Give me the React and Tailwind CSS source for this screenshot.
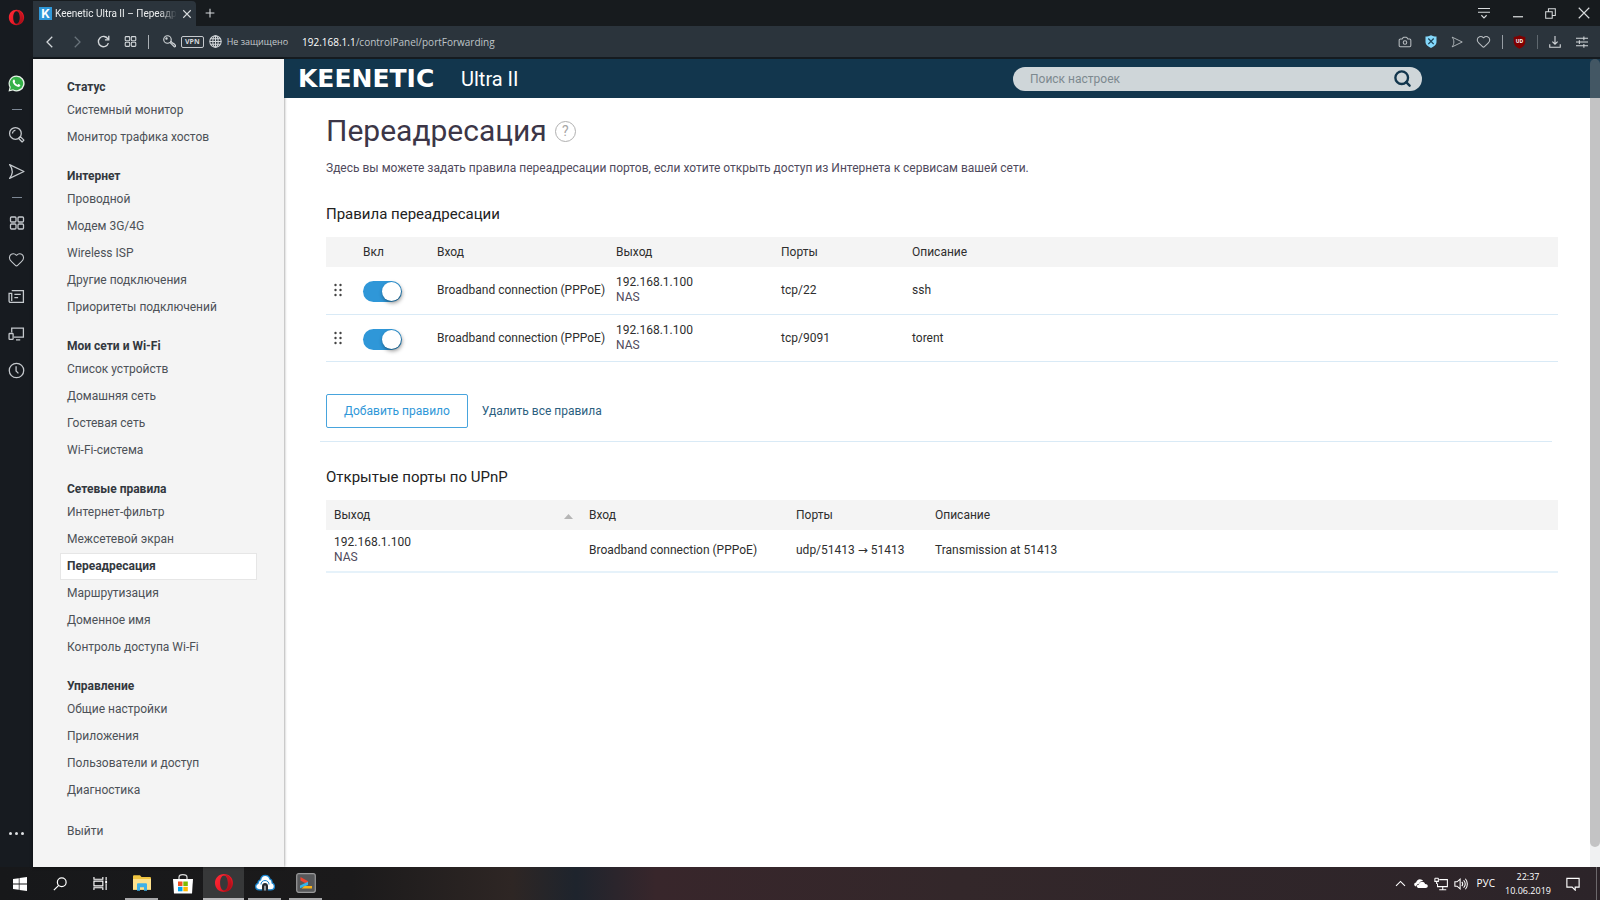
import React, { useState } from 'react';
import { Camera, Heart, Search } from 'lucide-react';

const menu = [
  { title: 'Статус', items: ['Системный монитор', 'Монитор трафика хостов'] },
  {
    title: 'Интернет',
    items: ['Проводной', 'Модем 3G/4G', 'Wireless ISP', 'Другие подключения', 'Приоритеты подключений'],
  },
  { title: 'Мои сети и Wi-Fi', items: ['Список устройств', 'Домашняя сеть', 'Гостевая сеть', 'Wi-Fi-система'] },
  {
    title: 'Сетевые правила',
    items: ['Интернет-фильтр', 'Межсетевой экран', 'Переадресация', 'Маршрутизация', 'Доменное имя', 'Контроль доступа Wi-Fi'],
  },
  { title: 'Управление', items: ['Общие настройки', 'Приложения', 'Пользователи и доступ', 'Диагностика'] },
];

const initialRules = [
  { id: 1, enabled: true, input: 'Broadband connection (PPPoE)', ip: '192.168.1.100', host: 'NAS', ports: 'tcp/22', note: 'ssh' },
  { id: 2, enabled: true, input: 'Broadband connection (PPPoE)', ip: '192.168.1.100', host: 'NAS', ports: 'tcp/9091', note: 'torent' },
];

const upnpRules = [
  { id: 1, ip: '192.168.1.100', host: 'NAS', input: 'Broadband connection (PPPoE)', ports: 'udp/51413 → 51413', note: 'Transmission at 51413' },
];

/* ---------- icons ---------- */

const Icon = ({ size = 16, sw = 1.2, children }) => (
  <svg width={size} height={size} viewBox="0 0 16 16" fill="none" stroke="currentColor" strokeWidth={sw} aria-hidden="true">
    {children}
  </svg>
);

const OperaLogo = ({ size }) => (
  <svg width={size} height={size} viewBox="0 0 20 20" aria-hidden="true">
    <defs>
      <linearGradient id="operaRing" x1="0" x2="1" y1="0" y2="1">
        <stop offset="0" stopColor="#ff2a36" />
        <stop offset="0.55" stopColor="#ee1a28" />
        <stop offset="1" stopColor="#a00d16" />
      </linearGradient>
    </defs>
    <path
      fillRule="evenodd"
      fill="url(#operaRing)"
      d="M10 1C4.8 1 1 5 1 10s3.800 9 9 9 9-4 9-9-3.800-9-9-9Zm0 1.600c2.300 0 3.900 3.200 3.900 7.400s-1.600 7.400-3.900 7.400S6.100 14.200 6.100 10 7.700 2.600 10 2.600Z"
    />
    <path fill="#8f0c15" d="M10 1.800c3.800-1.200 7.600 3.200 7.600 8.200s-3.800 9.400-7.600 8.200c2.600-.6 3.900-3.900 3.900-8.200S12.600 2.400 10 1.800Z" opacity=".4" />
  </svg>
);

const GridIcon = ({ size }) => (
  <Icon size={size} sw={1.3}>
    <rect x="1.500" y="2" width="5.500" height="5" rx="1" />
    <rect x="9" y="2" width="5.500" height="5" rx="1" />
    <rect x="1.500" y="9" width="5.500" height="5" rx="1" />
    <rect x="9" y="9" width="5.500" height="5" rx="1" />
  </Icon>
);

const FlowIcon = ({ size }) => (
  <Icon size={size}>
    <path d="M1.500 1.500 15 8 1.500 14.500C4.600 10.500 4.600 5.500 1.500 1.500Z" strokeLinejoin="round" />
  </Icon>
);

const sideIcons = [
  {
    label: 'Поиск',
    icon: (
      <Icon size={17}>
        <circle cx="7" cy="7" r="5.500" />
        <path d="M7 4.200A2.800 2.800 0 0 0 4.200 7" />
        <path d="m10.800 11 .9-.9 3.300 3.200-1.700 1.700-3.200-3.300Z" strokeLinejoin="round" />
      </Icon>
    ),
  },
  { label: 'My Flow', icon: <FlowIcon size={17} /> },
  { divider: true },
  { label: 'Экспресс-панель', icon: <GridIcon size={16} /> },
  { label: 'Закладки', icon: <Heart size={17} strokeWidth={1.5} /> },
  {
    label: 'Новости',
    icon: (
      <Icon size={17}>
        <path d="M3.500 2.500h11v11H2.300a1.300 1.300 0 0 1-1.300-1.300V5h2.500v7.200" />
        <path d="M6 6h6M6 9h3.500" />
      </Icon>
    ),
  },
  {
    label: 'Вкладки',
    icon: (
      <Icon size={17}>
        <path d="M3.500 7V3h11v8.500H5.500" />
        <rect x="1" y="8" width="3.800" height="5.500" rx=".6" />
        <path d="M7.500 14h4" />
      </Icon>
    ),
  },
  {
    label: 'История',
    icon: (
      <Icon size={17}>
        <circle cx="8" cy="8" r="6.800" />
        <path d="M7.600 4v4.500l2.200 2.200" />
      </Icon>
    ),
  },
];

/* ---------- browser ---------- */

const BrowserSidebar = () => (
  <aside className="w-[33px] shrink-0 bg-[#171b20] flex flex-col items-center text-[#c5c9cd]">
    <button className="h-[34px] w-full flex items-center justify-center" aria-label="Меню Opera">
      <OperaLogo size={17} />
    </button>
    <div className="mt-[31px] w-full flex flex-col items-center">
      <button className="h-[37px] w-full flex items-center justify-center" aria-label="WhatsApp">
        <svg width="17" height="17" viewBox="0 0 17 17" aria-hidden="true">
          <path d="M8.500.5a8 8 0 1 1-3.600 15.100L.5 16.500l1-4.200A8 8 0 0 1 8.500.5Z" fill="#e9f3ea" />
          <path d="M8.600 1.700a6.700 6.700 0 1 1-3.500 12.500l-3.100.8.800-3A6.700 6.700 0 0 1 8.600 1.700Z" fill="#35b148" />
          <path
            d="M5.400 4.700c.4-.4.900-.3 1.100.1l.6 1.300c.1.300 0 .6-.5 1.100.6 1.200 1.600 2.100 2.900 2.700.5-.6.800-.9 1.100-.8l1.400.7c.4.200.4.500.2 1-.4.9-1.500 1.300-2.500 1C7.200 11 5.300 9.100 4.700 6.900c-.2-.8.100-1.600.7-2.200Z"
            fill="#fff"
          />
        </svg>
      </button>
      <div className="h-[14px] flex items-center">
        <span className="w-[10px] h-px bg-[#7c8794]"></span>
      </div>
      {sideIcons.map((item, i) =>
        item.divider ? (
          <div key={i} className="h-[14px] flex items-center">
            <span className="w-[10px] h-px bg-[#7c8794]"></span>
          </div>
        ) : (
          <button key={i} className="h-[37px] w-full flex items-center justify-center" aria-label={item.label}>
            {item.icon}
          </button>
        )
      )}
    </div>
    <button className="mt-auto mb-4 h-9 w-full flex items-center justify-center gap-[3px]" aria-label="Настройка боковой панели">
      <span className="w-[3px] h-[3px] rounded-full bg-[#dfe2e4]"></span>
      <span className="w-[3px] h-[3px] rounded-full bg-[#dfe2e4]"></span>
      <span className="w-[3px] h-[3px] rounded-full bg-[#dfe2e4]"></span>
    </button>
  </aside>
);

const TabBar = () => (
  <div className="h-[26px] bg-[#171b1e] flex items-stretch text-[#d8dbdd]">
    <div className="w-[163px] bg-[#2b343c] rounded-tr flex items-center pl-1.5 pr-px mt-px">
      <span className="w-[13px] h-[13px] shrink-0 bg-[#2f97d8] text-white flex items-center justify-center text-[12px] leading-none font-['Inter',sans-serif] font-bold">
        K
      </span>
      <span className="ml-[3px] flex-1 whitespace-nowrap text-[10px] font-['Roboto',sans-serif] text-[#eceeef] [mask-image:linear-gradient(to_right,black_85%,transparent)]">
        Keenetic Ultra II – Переадр
      </span>
      <button className="w-5 shrink-0 flex items-center justify-center" aria-label="Закрыть вкладку">
        <Icon size={10}>
          <path d="m2 2 12 12M14 2 2 14" strokeWidth="1.700" />
        </Icon>
      </button>
    </div>
    <button className="w-7 flex items-center justify-center" aria-label="Новая вкладка">
      <Icon size={10}>
        <path d="M8 1v14M1 8h14" strokeWidth="1.700" />
      </Icon>
    </button>
    <div className="ml-auto flex">
      <button className="w-[34px] flex items-center justify-center" aria-label="Меню вкладок">
        <Icon size={12}>
          <path d="M0 2h16M0 7h16M4.500 11 8 14.500 11.500 11" strokeWidth="1.500" />
        </Icon>
      </button>
      <button className="w-[33px] flex items-center justify-center" aria-label="Свернуть">
        <Icon size={10}>
          <path d="M0 14h16" strokeWidth="2" />
        </Icon>
      </button>
      <button className="w-[33px] flex items-center justify-center" aria-label="Восстановить">
        <Icon size={11}>
          <path d="M1 5.500h9.500V15H1ZM5 5.500V1h10v10h-4.500" strokeWidth="1.500" />
        </Icon>
      </button>
      <button className="w-[33px] flex items-center justify-center" aria-label="Закрыть">
        <Icon size={12}>
          <path d="m1 1 14 14M15 1 1 15" strokeWidth="1.500" />
        </Icon>
      </button>
    </div>
  </div>
);

const AddressBar = () => (
  <div className="h-[33px] bg-[#2b343c] border-b-2 border-[#151b20] flex items-center text-[#d3d7da]">
    <button className="ml-[3px] w-[27px] flex justify-center" aria-label="Назад">
      <Icon size={12} sw={1.7}>
        <path d="M11 1 4 8l7 7" />
      </Icon>
    </button>
    <button className="w-[27px] flex justify-center text-[#68727a]" aria-label="Вперёд">
      <Icon size={12} sw={1.7}>
        <path d="m5 1 7 7-7 7" />
      </Icon>
    </button>
    <button className="w-[27px] flex justify-center" aria-label="Обновить">
      <Icon size={13} sw={1.7}>
        <path d="M14 10a6.300 6.300 0 1 1-.6-5.200M14.500 1v5H9.800" />
      </Icon>
    </button>
    <button className="w-[27px] flex justify-center" aria-label="Экспресс-панель">
      <GridIcon size={13} />
    </button>
    <span className="w-px h-[14px] ml-1 bg-[#aab0b5]"></span>
    <span className="ml-[14px]">
      <Icon size={13} sw={1.4}>
        <circle cx="5.500" cy="5.500" r="4.600" />
        <circle cx="4.300" cy="4.300" r=".8" />
        <path d="m8.500 9 5.500 5.500 1.200-.3.200-1.800-1.500-.4-.4-1.600-1.600-.4L9.600 7.500" />
      </Icon>
    </span>
    <span className="ml-[5px] h-3 px-[3px] border border-[#c5c9cd] rounded-[2px] text-[7px] leading-[10px] font-bold">VPN</span>
    <span className="ml-[5px]">
      <Icon size={13} sw={1.3}>
        <circle cx="8" cy="8" r="7" />
        <ellipse cx="8" cy="8" rx="3.300" ry="7" />
        <path d="M8 1v14M1 8h14M2 4.500h12M2 11.500h12" />
      </Icon>
    </span>
    <span className="ml-[5px] text-[9px] leading-4 whitespace-nowrap text-[#c5cacd]">Не защищено</span>
    <a href="#address" className="ml-[14px] text-[10px] leading-4 whitespace-nowrap text-[#bfc4c8]">
      <span className="text-white">192.168.1.1</span>/controlPanel/portForwarding
    </a>

    <div className="ml-auto flex items-center pr-[5px] text-[#b9bec2]">
      <button className="w-[26px] flex justify-center" aria-label="Снимок">
        <Camera size={14} strokeWidth={1.8} />
      </button>
      <button className="w-[26px] flex justify-center" aria-label="Блокировка рекламы">
        <svg width="12" height="13" viewBox="0 0 12 13" aria-hidden="true">
          <path d="M.5 1.500C2.500 1.500 4.500 1 6 .2c1.500.8 3.500 1.300 5.500 1.300v5.800c0 2.500-2.500 4.500-5.500 5.600C3 11.800.5 9.800.5 7.300Z" fill="#84d8fb" />
          <path d="m3.300 3.500 5.400 5.600m0-5.600L3.300 9.100" stroke="#1d4459" strokeWidth="1.300" />
        </svg>
      </button>
      <button className="w-[26px] flex justify-center" aria-label="Отправить в My Flow">
        <FlowIcon size={12} />
      </button>
      <button className="w-[26px] flex justify-center" aria-label="Добавить в закладки">
        <Heart size={15} strokeWidth={1.7} />
      </button>
      <span className="w-px h-[14px] mx-[6px] bg-[#969da3]"></span>
      <button className="w-[21px] flex justify-center" aria-label="uBlock Origin">
        <span className="relative flex">
          <svg width="13" height="14" viewBox="0 0 13 14" aria-hidden="true">
            <path d="M6.500.3C8.500 1.600 10.500 1.900 12.300 2v5c0 3-2.500 5.200-5.800 6.700C3.200 12.200.7 10 .7 7V2C2.500 1.900 4.500 1.600 6.500.3Z" fill="#800000" />
          </svg>
          <span className="absolute inset-x-0 top-[3px] text-center text-[5px] leading-[6px] font-bold text-white">UD</span>
        </span>
      </button>
      <span className="w-px h-[14px] ml-[7px] mr-[3px] bg-[#5f686f]"></span>
      <button className="w-[27px] flex justify-center text-[#d3d7da]" aria-label="Загрузки">
        <Icon size={12} sw={1.5}>
          <path d="M8 0v11M4.500 7.500 8 11l3.500-3.500M1 11v4h14v-4" />
        </Icon>
      </button>
      <button className="w-[27px] flex justify-center text-[#d3d7da]" aria-label="Простые настройки">
        <Icon size={12} sw={1.4}>
          <path d="M0 3h16M0 8h16M0 13h16M10.500.5v5M4.500 5.500v5M10.500 10.500v5" />
        </Icon>
      </button>
    </div>
  </div>
);

/* ---------- router page ---------- */

const SideMenu = ({ active, onSelect }) => (
  <nav className="w-[251px] shrink-0 bg-[#f4f4f4] px-[27px] pt-[19px] pb-4 text-[12px] text-[#4c5157] shadow-[0_0_3px_rgba(0,0,0,0.55)] z-10">
    {menu.map((group) => (
      <section key={group.title} className="mb-4 last-of-type:mb-[14px]">
        <h3 className="h-[19px] leading-[19px] pl-[7px] font-bold text-[#33383e]">{group.title}</h3>
        <ul>
          {group.items.map((item) => (
            <li key={item}>
              <a
                href="#menu"
                onClick={() => onSelect(item)}
                className={`block h-[27px] leading-[25px] border px-1.5 ${
                  item === active ? 'bg-white border-[#e6e6e6] font-bold text-[#33383e]' : 'border-transparent'
                }`}
              >
                {item}
              </a>
            </li>
          ))}
        </ul>
      </section>
    ))}
    <a href="#logout" className="block h-[27px] leading-[25px] border border-transparent px-1.5">
      Выйти
    </a>
  </nav>
);

const PageHeader = () => (
  <header className="h-[39px] bg-[#12364d] flex items-center justify-between text-white pl-[14px] pr-[178px]">
    <div className="flex items-center gap-[14px] whitespace-nowrap">
      <span className="min-w-[149px] text-[25px] leading-8 font-bold font-['DejaVu_Sans',sans-serif]">KEENETIC</span>
      <span className="text-[20px] leading-8">Ultra II</span>
    </div>
    <form className="w-[409px] h-6 rounded-full bg-[#cfd6d9] flex items-center pl-[17px] pr-[10px]">
      <input
        type="text"
        aria-label="Поиск настроек"
        placeholder="Поиск настроек"
        className="flex-1 bg-transparent outline-none text-[12px] text-[#12364d] placeholder:text-[#7d898f]"
      />
      <button type="button" aria-label="Найти" className="text-[#12364d]">
        <Search size={19} strokeWidth={3} />
      </button>
    </form>
  </header>
);

const Host = ({ ip, host }) => (
  <div className="leading-[15px]">
    <div>{ip}</div>
    <div className="text-[#4f4a5c]">{host}</div>
  </div>
);

const RulesTable = ({ rules, onToggle }) => (
  <table className="w-full table-fixed text-left">
    <colgroup>
      <col className="w-[37px]" />
      <col className="w-[74px]" />
      <col className="w-[179px]" />
      <col className="w-[165px]" />
      <col className="w-[131px]" />
      <col />
    </colgroup>
    <thead>
      <tr className="h-[30px] bg-[#f4f4f4]">
        <th></th>
        <th className="font-normal">Вкл</th>
        <th className="font-normal">Вход</th>
        <th className="font-normal">Выход</th>
        <th className="font-normal">Порты</th>
        <th className="font-normal">Описание</th>
      </tr>
    </thead>
    <tbody>
      {rules.map((rule) => (
        <tr key={rule.id} className="h-[47px] border-b border-[#d9eaf6]">
          <td className="pl-2">
            <svg width="8" height="14" viewBox="0 0 8 14" fill="#444" aria-hidden="true">
              <circle cx="1.500" cy="2" r="1.200" />
              <circle cx="6.500" cy="2" r="1.200" />
              <circle cx="1.500" cy="7" r="1.200" />
              <circle cx="6.500" cy="7" r="1.200" />
              <circle cx="1.500" cy="12" r="1.200" />
              <circle cx="6.500" cy="12" r="1.200" />
            </svg>
          </td>
          <td>
            <input
              type="checkbox"
              role="switch"
              aria-label={`Правило ${rule.note}`}
              checked={rule.enabled}
              onChange={() => onToggle(rule.id)}
              className="block mt-[3px] appearance-none w-[39px] h-[21px] p-px rounded-full bg-[#c4c9cc] checked:bg-[#2f97d8] before:block before:w-[19px] before:h-[19px] before:rounded-full before:bg-white before:shadow-[1px_2px_4px_rgba(0,0,0,0.45)] checked:before:ml-[18px]"
            />
          </td>
          <td>{rule.input}</td>
          <td>
            <Host ip={rule.ip} host={rule.host} />
          </td>
          <td>{rule.ports}</td>
          <td>{rule.note}</td>
        </tr>
      ))}
    </tbody>
  </table>
);

const UpnpTable = () => (
  <table className="w-full table-fixed text-left">
    <colgroup>
      <col className="w-[263px]" />
      <col className="w-[207px]" />
      <col className="w-[139px]" />
      <col />
    </colgroup>
    <thead>
      <tr className="h-[30px] bg-[#f4f4f4]">
        <th className="font-normal pl-2 pr-4">
          <div className="flex items-center justify-between">
            Выход
            <svg width="9" height="5" viewBox="0 0 9 5" className="mt-1" aria-hidden="true">
              <path d="M4.500 0 9 5H0Z" fill="#b5b5b5" />
            </svg>
          </div>
        </th>
        <th className="font-normal">Вход</th>
        <th className="font-normal">Порты</th>
        <th className="font-normal">Описание</th>
      </tr>
    </thead>
    <tbody>
      {upnpRules.map((rule) => (
        <tr key={rule.id} className="h-[42px] border-b-2 border-[#e6f2fa]">
          <td className="pl-2">
            <Host ip={rule.ip} host={rule.host} />
          </td>
          <td>{rule.input}</td>
          <td>{rule.ports}</td>
          <td>{rule.note}</td>
        </tr>
      ))}
    </tbody>
  </table>
);

const ForwardingPage = () => {
  const [rules, setRules] = useState(initialRules);

  const toggleRule = (id) => {
    setRules((prev) => prev.map((r) => (r.id === id ? { ...r, enabled: !r.enabled } : r)));
  };

  return (
    <main className="px-[42px] pt-[13px] text-[12px] text-[#2e2e2e]">
      <div className="flex items-center gap-2">
        <h1 className="text-[30px] leading-[40px] text-[#3c3647]">Переадресация</h1>
        <button
          className="w-[21px] h-[21px] rounded-full border border-[#b0b0b0] text-[#a6a6a6] text-[14px] leading-none flex items-center justify-center"
          aria-label="Справка"
        >
          ?
        </button>
      </div>
      <p className="mt-2 leading-[18px] text-[#4f4a5c]">
        Здесь вы можете задать правила переадресации портов, если хотите открыть доступ из Интернета к сервисам вашей сети.
      </p>

      <h2 className="mt-[27px] mb-[13px] text-[15px] leading-5 text-[#222]">Правила переадресации</h2>
      <RulesTable rules={rules} onToggle={toggleRule} />

      <div className="mt-8 flex items-center gap-[14px]">
        <button className="h-[34px] px-[17px] border border-[#48a4dd] rounded-[2px] text-[#2f97d8]">Добавить правило</button>
        <button onClick={() => setRules([])} className="text-[#2c5f7f]">
          Удалить все правила
        </button>
      </div>
      <hr className="mt-[13px] -ml-1.5 mr-1.5 border-[#d9eaf6]" />

      <h2 className="mt-[25px] mb-[13px] text-[15px] leading-5 text-[#222]">Открытые порты по UPnP</h2>
      <UpnpTable />
    </main>
  );
};

/* ---------- taskbar ---------- */

const Taskbar = () => (
  <footer className="h-[33px] flex items-stretch text-white bg-[linear-gradient(to_right,#17181a_0%,#1b1a1b_22%,#2e2624_32%,#1e242d_36%,#38262b_41%,#33272a_60%,#2c2429_100%)]">
    <button className="w-10 flex items-center justify-center" aria-label="Пуск">
      <svg width="14" height="14" viewBox="0 0 14 14" fill="#fff" aria-hidden="true">
        <path d="M0 2 5.800 1.200v5.400H0ZM6.500 1.100 14 0v6.600H6.500ZM0 7.400h5.800v5.400L0 12ZM6.500 7.400H14V14l-7.500-1.100Z" />
      </svg>
    </button>
    <button className="w-10 flex items-center justify-center" aria-label="Поиск">
      <Icon size={14} sw={1.4}>
        <circle cx="10" cy="6" r="5" />
        <path d="M6.500 9.500 1 15" />
      </Icon>
    </button>
    <button className="w-10 mr-px flex items-center justify-center" aria-label="Представление задач">
      <Icon size={15} sw={1.2}>
        <path d="M1 1v2.500h9.500V1M1 15v-2.500h9.500V15M1 5.500h9.500v5H1ZM14 1v3.500M14 8.500V15" />
        <rect x="13" y="5" width="2" height="3" fill="currentColor" stroke="none" />
      </Icon>
    </button>
    <button className="w-[41px] flex flex-col items-center" aria-label="Проводник">
      <span className="flex-1 flex items-center">
        <svg width="18" height="16" viewBox="0 0 18 16" aria-hidden="true">
          <path d="M0 1.500C0 .7.500.2 1.200.2H7l1.500 1.900H16.800c.7 0 1.200.5 1.200 1.200V14.500H0Z" fill="#f0c541" />
          <path d="M0 4h18v10.800H0Z" fill="#fde18d" />
          <path d="M4 15.800V9.400C4 8.600 4.500 8.200 5.300 8.200h7.400c.8 0 1.300.4 1.300 1.200v6.400h-3v-3.600H7v3.600Z" fill="#3fb1e8" />
        </svg>
      </span>
      <span className="h-0.5 w-[33px] bg-[#a8a8aa]"></span>
    </button>
    <button className="w-[41px] flex items-center justify-center" aria-label="Microsoft Store">
      <svg width="20" height="20" viewBox="0 0 20 20" aria-hidden="true">
        <path d="M6 6V3.200C6 1.500 7.500.6 9.800.6s4.200.9 4.200 2.600V6" fill="none" stroke="#ddd" strokeWidth="1.200" />
        <path d="M0 5h20l-1 14.500H1Z" fill="#fff" />
        <path d="M5 7.500h4.500v4.500H5Z" fill="#f25022" />
        <path d="M10.300 7.500h4.500v4.500h-4.500Z" fill="#7fba00" />
        <path d="M5 12.800h4.500v4.500H5Z" fill="#00a4ef" />
        <path d="M10.300 12.800h4.500v4.500h-4.500Z" fill="#ffb900" />
      </svg>
    </button>
    <button className="w-[41px] flex flex-col items-center bg-[#373839]" aria-label="Opera">
      <span className="flex-1 flex items-center">
        <OperaLogo size={20} />
      </span>
      <span className="h-0.5 w-full bg-[#b8b8ba]"></span>
    </button>
    <button className="w-[41px] flex flex-col items-center" aria-label="Облако">
      <span className="flex-1 flex items-center">
        <svg width="20" height="17" viewBox="0 0 20 17" aria-hidden="true">
          <path
            d="M4.300 15.800C2 15.800.7 14.300.7 12.500c0-1.600.9-2.800 2.300-3.200C3 7.500 4 6.200 5.600 5.800 6 3 7.700 1.300 10.200 1.300c2.400 0 4.100 1.400 4.600 3.600 1.600.6 2.500 2 2.300 4 1.500.6 2.300 1.800 2.300 3.400 0 2-1.400 3.500-3.600 3.500Z"
            fill="#fff"
            stroke="#1b86cf"
            strokeWidth="1.300"
          />
          <path d="M6 10.500C5.800 8.500 7.500 6.500 10 6.500s4.200 2 4 4" fill="none" stroke="#1b86cf" strokeWidth="1" />
          <path d="M7 17v-5C7 10 8.300 9 10 9s3 1 3 3v5Z" fill="#23282e" />
          <path d="M9 16.500V12.500c0-1.300 2-1.300 2 0v4Z" fill="#8f979e" />
        </svg>
      </span>
      <span className="h-0.5 w-[33px] bg-[#a8a8aa]"></span>
    </button>
    <button className="w-[41px] flex flex-col items-center" aria-label="Приложение">
      <span className="flex-1 flex items-center">
        <svg width="20" height="20" viewBox="0 0 20 20" aria-hidden="true">
          <rect x=".7" y=".7" width="18.600" height="18.600" rx="2" fill="#57585a" stroke="#9a9a9b" strokeWidth="1.200" />
          <path d="M4.500 4 12 8.200v3.500L4.500 7.500Z" fill="#f0452f" />
          <path d="M12 8.700v3.200L4 15.200v-2.800Z" fill="#35b4e8" />
          <path d="M8.500 13H16v2.500H5.500Z" fill="#f8b218" />
        </svg>
      </span>
      <span className="h-0.5 w-[33px] bg-[#a8a8aa]"></span>
    </button>

    <div className="ml-auto flex items-center">
      <button className="w-5 flex justify-center" aria-label="Показать скрытые значки">
        <Icon size={11} sw={1.600}>
          <path d="M1.500 11.500 8 5l6.500 6.500" />
        </Icon>
      </button>
      <button className="w-5 flex justify-center" aria-label="OneDrive">
        <svg width="14" height="9" viewBox="0 0 14 9" fill="#fff" aria-hidden="true">
          <path d="M2.200 7.500C.9 7.400.2 6.500.2 5.500c0-1.100.8-1.900 1.900-2C2.500 1.500 4 .2 5.900.2c1.400 0 2.600.7 3.200 1.900-2-.3-3.600.9-4 2.700C3.600 4.900 2.400 6 2.200 7.500Z" />
          <path d="M5 9C3.700 9 2.900 8.200 2.900 7.200c0-1.100.9-1.800 2-1.800C5.200 3.700 6.400 2.700 8 2.700c1.500 0 2.700.9 3.100 2.300C12.700 5 13.800 5.800 13.800 7c0 1.200-.9 2-2.200 2Z" />
        </svg>
      </button>
      <button className="w-5 flex justify-center" aria-label="Сеть">
        <Icon size={14} sw={1.200}>
          <path d="M6 3h9.300v8H4V7.500M10 11v3.500M6 14.500h8M1 1.500h4M1 1.500v3.500h4V1.500M3 5v3" />
        </Icon>
      </button>
      <button className="w-5 flex justify-center" aria-label="Громкость">
        <Icon size={14} sw={1.200}>
          <path d="M1 5.500h2.500L7 2.500v11l-3.500-3H1ZM9 5.500c1.200 1.500 1.200 3.500 0 5M11 3.700c2.200 2.500 2.200 6.100 0 8.600M13 2c3 3.500 3 8.500 0 12" />
        </Icon>
      </button>
      <button className="ml-1.5 text-[10px]">РУС</button>
      <time className="ml-[10px] w-[46px] text-center whitespace-nowrap text-[9px] leading-[14px]">
        22:37
        <br />
        10.06.2019
      </time>
      <button className="ml-[14px] w-4 flex justify-center" aria-label="Центр уведомлений">
        <Icon size={14} sw={1.300}>
          <path d="M1 1.500h14v10h-4.500V15L7 11.500H1Z" />
        </Icon>
      </button>
      <button className="ml-[15px] w-1 self-stretch border-l border-[#6c686b]" aria-label="Свернуть все окна"></button>
    </div>
  </footer>
);

const App = () => {
  const [active, setActive] = useState('Переадресация');

  return (
    <div className="min-h-screen flex flex-col bg-white font-['Open_Sans','Noto_Sans',sans-serif]">
      <div className="flex-1 flex">
        <BrowserSidebar />
        <div className="flex-1 min-w-0 flex flex-col">
          <TabBar />
          <AddressBar />
          <div className="relative flex-1 flex font-['Roboto','DejaVu_Sans',sans-serif]">
            <SideMenu active={active} onSelect={setActive} />
            <div className="flex-1 min-w-0 relative z-20">
              <PageHeader />
              <ForwardingPage />
            </div>
            {/* Scrollbar */}
            <div className="absolute z-30 right-0 inset-y-0 w-[10px] pb-5 bg-gray-500/10" aria-hidden="true">
              <div className="h-full rounded-full bg-[rgba(128,128,128,0.4)]"></div>
            </div>
          </div>
        </div>
      </div>
      <Taskbar />
    </div>
  );
};

export default App;
